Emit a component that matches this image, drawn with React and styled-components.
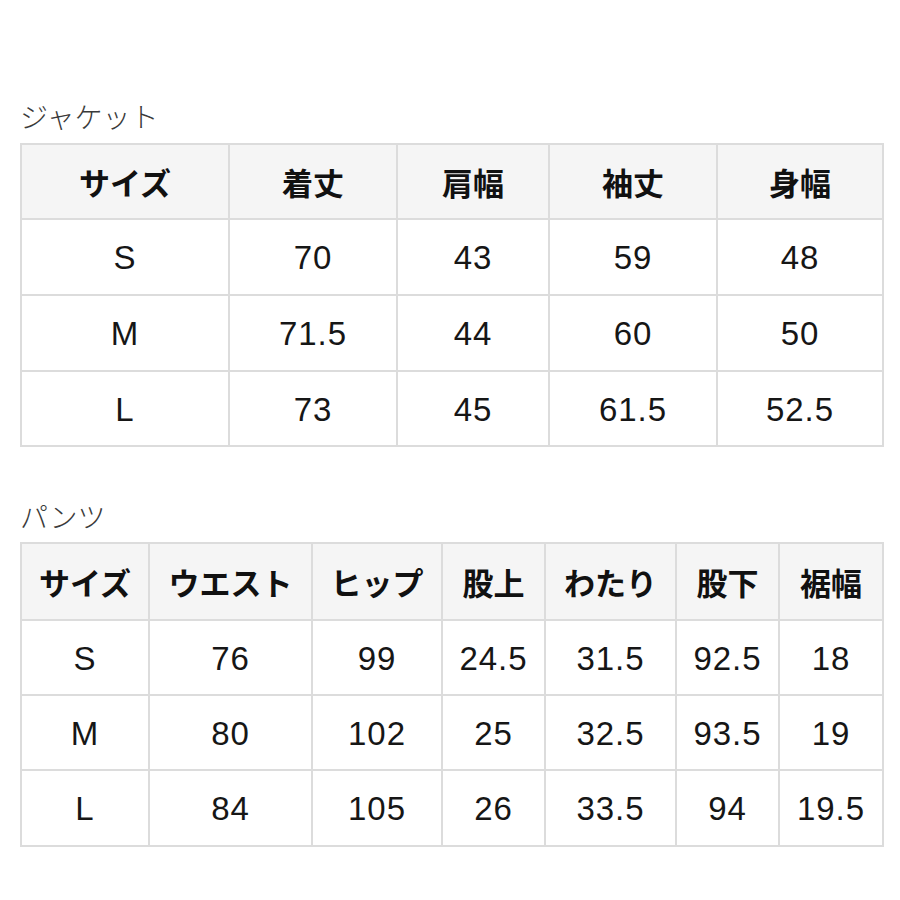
import React from "react";
import styled, { createGlobalStyle } from "styled-components";

const GlobalStyle = createGlobalStyle`
  html, body {
    margin: 0;
    padding: 0;
    background: #ffffff;
  }
  body {
    font-family: "Liberation Sans", "Noto Sans CJK JP", sans-serif;
    color: #111;
  }
`;

const Page = styled.div`
  width: 900px;
  padding: 96px 16px 0 20px;
  box-sizing: border-box;
`;

const Section = styled.section`
  margin-bottom: ${(p) => p.$gap || 0}px;
`;

const Title = styled.h2`
  margin: 0 0 ${(p) => p.$space}px;
  height: 40px;
  line-height: 40px;
  font-family: "Noto Sans CJK JP", sans-serif;
  font-weight: 300;
  font-size: 28px;
  color: #3a3a3a;
`;

const Grid = styled.div`
  display: grid;
  width: 864px;
  box-sizing: border-box;
  grid-template-columns: ${(p) => p.$cols};
  grid-template-rows: ${(p) => p.$rows};
  border-top: 2px solid #dcdcdc;
  border-left: 2px solid #dcdcdc;
`;

const Cell = styled.div`
  display: flex;
  align-items: center;
  justify-content: center;
  box-sizing: border-box;
  border-right: 2px solid #dcdcdc;
  border-bottom: 2px solid #dcdcdc;
  white-space: nowrap;
`;

const HeadCell = styled(Cell)`
  background: #f5f5f5;
  font-family: "Noto Sans CJK JP", sans-serif;
  font-weight: 700;
  font-size: 31px;
  color: #111;
`;

const DataCell = styled(Cell)`
  font-family: "Liberation Sans", "Noto Sans CJK JP", sans-serif;
  font-size: 33px;
  letter-spacing: 1px;
  color: #161616;
  padding-top: 2px;
`;

const jacket = {
  cols: "208px 168px 152px 168px 166px",
  rows: "75px 76px 76px 75px",
  head: ["サイズ", "着丈", "肩幅", "袖丈", "身幅"],
  body: [
    ["S", "70", "43", "59", "48"],
    ["M", "71.5", "44", "60", "50"],
    ["L", "73", "45", "61.5", "52.5"],
  ],
};

const pants = {
  cols: "128px 163px 130px 103px 131px 103px 104px",
  rows: "77px 75px 75px 76px",
  head: ["サイズ", "ウエスト", "ヒップ", "股上", "わたり", "股下", "裾幅"],
  body: [
    ["S", "76", "99", "24.5", "31.5", "92.5", "18"],
    ["M", "80", "102", "25", "32.5", "93.5", "19"],
    ["L", "84", "105", "26", "33.5", "94", "19.5"],
  ],
};

function SizeTable({ data }) {
  return (
    <Grid $cols={data.cols} $rows={data.rows}>
      {data.head.map((h) => (
        <HeadCell key={h}>{h}</HeadCell>
      ))}
      {data.body.map((row) =>
        row.map((v, i) => <DataCell key={row[0] + i}>{v}</DataCell>)
      )}
    </Grid>
  );
}

export default function App() {
  return (
    <>
      <GlobalStyle />
      <Page>
        <Section $gap={49}>
          <Title $space={7}>ジャケット</Title>
          <SizeTable data={jacket} />
        </Section>
        <Section>
          <Title $space={6}>パンツ</Title>
          <SizeTable data={pants} />
        </Section>
      </Page>
    </>
  );
}
